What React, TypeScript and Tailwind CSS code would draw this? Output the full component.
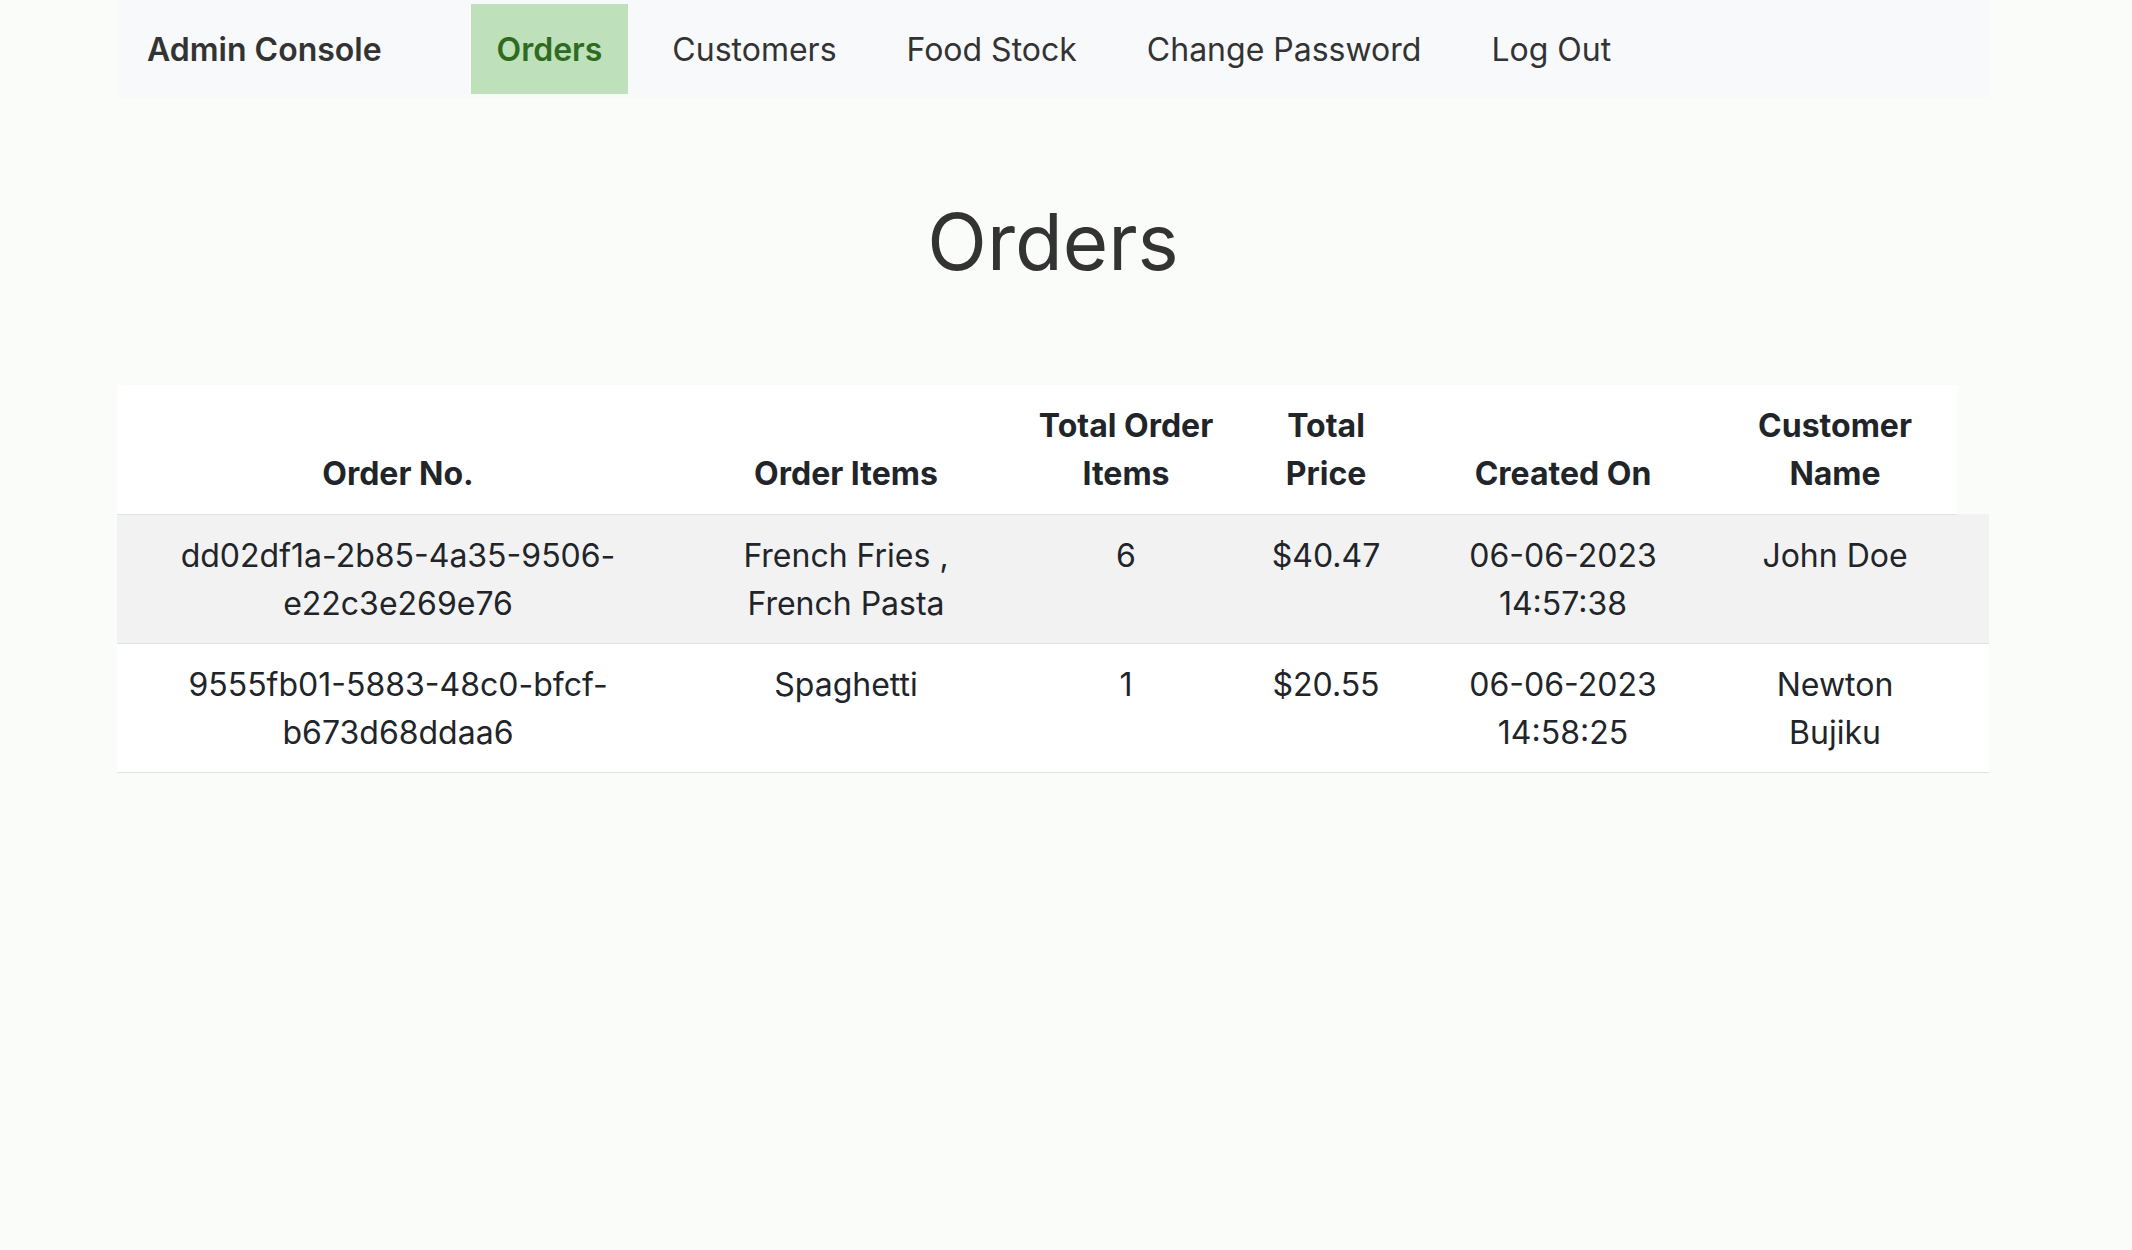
import React from "react";

const rows = [
  {
    id: "dd02df1a-2b85-4a35-9506-e22c3e269e76",
    items: "French Fries , French Pasta",
    count: "6",
    price: "$40.47",
    created: "06-06-2023 14:57:38",
    customer: "John Doe",
    bg: "bg-[#f2f2f2]",
  },
  {
    id: "9555fb01-5883-48c0-bfcf-b673d68ddaa6",
    items: "Spaghetti",
    count: "1",
    price: "$20.55",
    created: "06-06-2023 14:58:25",
    customer: "Newton Bujiku",
    bg: "bg-white",
  },
];

const navItems = ["Orders", "Customers", "Food Stock", "Change Password", "Log Out"];

export default function App() {
  return (
    <div className="min-h-[1250px] bg-[#fafcfa] font-['Inter','Noto_Sans',sans-serif] pl-[117px]">
      <div className="w-[1872px]">
        <nav className="h-[98px] bg-[#f8f9fb] flex items-center pl-[30px]">
          <span className="text-[32px] leading-[48px] pt-[2px] font-semibold text-[#333333]">Admin Console</span>
          <ul className="flex items-center ml-[89px] gap-[18px]">
            {navItems.map((n, i) => (
              <li
                key={n}
                className={
                  i === 0
                    ? "h-[90px] px-[26px] pt-[2px] flex items-center bg-[#bee0ba] text-[#2f6b1f] font-semibold text-[32px] leading-[48px]"
                    : "h-[90px] px-[26px] pt-[2px] flex items-center text-[#333333] text-[32px] leading-[48px]"
                }
              >
                {n}
              </li>
            ))}
          </ul>
        </nav>
        <h1 className="text-center text-[78px] leading-[1.2] font-normal text-[#333333] mt-[97px] mb-[96px]">Orders</h1>
        <table className="w-[1872px] table-fixed border-collapse text-[32px] leading-[48px] text-[#212529]">
          <colgroup>
            <col className="w-[562px]" />
            <col className="w-[334px]" />
            <col className="w-[226px]" />
            <col className="w-[174px]" />
            <col className="w-[300px]" />
            <col className="w-[244px]" />
            <col className="w-[32px]" />
          </colgroup>
          <thead>
            <tr>
              {["Order No.", "Order Items", "Total Order Items", "Total Price", "Created On", "Customer Name"].map((h) => (
                <th
                  key={h}
                  className="bg-white align-bottom text-center font-bold px-[16px] pt-[17px] pb-[16px] border-b border-[#dee2e6]"
                >
                  {h}
                </th>
              ))}
              <th className="p-0"></th>
            </tr>
          </thead>
          <tbody>
            {rows.map((r) => (
              <tr key={r.id} className={`${r.bg} border-b border-[#dee2e6]`}>
                {[r.id, r.items, r.count, r.price, r.created, r.customer].map((c, i) => (
                  <td key={i} className="align-top text-center px-[16px] pt-[17px] pb-[15px]">
                    {c}
                  </td>
                ))}
                <td className="p-0"></td>
              </tr>
            ))}
          </tbody>
        </table>
      </div>
    </div>
  );
}
